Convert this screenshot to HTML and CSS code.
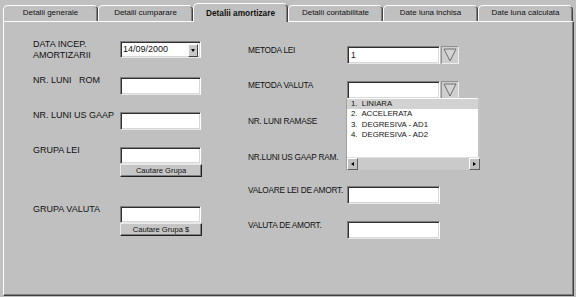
FILE: index.html
```html
<!DOCTYPE html>
<html>
<head>
    <title>Detalii amortizare</title>
    <link rel="stylesheet" href="styles.css">
</head>
<body>
    <div class="tabs">
        <div class="tab">Detalii generale</div>
        <div class="tab">Detalii cumparare</div>
        <div class="tab active">Detalii amortizare</div>
        <div class="tab">Detalii contabilitate</div>
        <div class="tab">Date luna inchisa</div>
        <div class="tab">Date luna calculata</div>
    </div>

    <div class="panel">
        <div class="col left">
            <div class="row r1">
                <span class="label">DATA INCEP.<br>AMORTIZARII</span>
                <div class="field date">
                    <span class="value">14/09/2000</span>
                    <span class="drop"><i></i></span>
                </div>
            </div>
            <div class="row r2">
                <span class="label">NR. LUNI&nbsp;&nbsp; ROM</span>
                <div class="field input"></div>
            </div>
            <div class="row r3">
                <span class="label">NR. LUNI US GAAP</span>
                <div class="field input"></div>
            </div>
            <div class="row r4">
                <span class="label">GRUPA LEI</span>
                <div class="group">
                    <div class="field input short"></div>
                    <div class="button">Cautare Grupa</div>
                </div>
            </div>
            <div class="row r5">
                <span class="label">GRUPA VALUTA</span>
                <div class="group">
                    <div class="field input short"></div>
                    <div class="button">Cautare Grupa $</div>
                </div>
            </div>
        </div>

        <div class="col right">
            <div class="row q1">
                <span class="label">METODA LEI</span>
                <div class="combo">
                    <div class="field box">1</div>
                    <div class="arrow">
                        <svg width="16" height="16" viewBox="0 0 16 16"><polygon points="2,2 14,2 8,14" fill="#d4d4d4" stroke="#6e6e6e" stroke-width="1"/></svg>
                    </div>
                </div>
            </div>
            <div class="row q2">
                <span class="label">METODA VALUTA</span>
                <div class="combo">
                    <div class="field box"></div>
                    <div class="arrow">
                        <svg width="16" height="16" viewBox="0 0 16 16"><polygon points="2,2 14,2 8,14" fill="#d4d4d4" stroke="#6e6e6e" stroke-width="1"/></svg>
                    </div>
                </div>
            </div>
            <div class="row q3">
                <span class="label">NR. LUNI RAMASE</span>
            </div>
            <div class="row q4">
                <span class="label">NR.LUNI US GAAP RAM.</span>
            </div>
            <div class="row q5">
                <span class="label">VALOARE LEI DE AMORT.</span>
                <div class="field wide"></div>
            </div>
            <div class="row q6">
                <span class="label">VALUTA DE AMORT.</span>
                <div class="field wide"></div>
            </div>
        </div>

        <div class="list">
            <div class="items">
                <div class="item selected">1.&nbsp; LINIARA</div>
                <div class="item">2.&nbsp; ACCELERATA</div>
                <div class="item">3.&nbsp; DEGRESIVA - AD1</div>
                <div class="item">4.&nbsp; DEGRESIVA - AD2</div>
            </div>
            <div class="scrollbar">
                <span class="sbtn"><i class="left-arrow"></i></span>
                <span class="track"></span>
                <span class="sbtn"><i class="right-arrow"></i></span>
            </div>
        </div>
    </div>
</body>
</html>
```

FILE: styles.css
```css
* {
    margin: 0;
    padding: 0;
    box-sizing: border-box;
}
body {
    width: 576px;
    height: 297px;
    overflow: hidden;
    background: #c0c0c0;
    color: #111;
    font-family: "Liberation Sans", Arial, sans-serif;
}

/* tab strip */
.tabs {
    display: flex;
    align-items: flex-end;
    height: 21px;
    padding-left: 3px;
}
.tab {
    width: 95px;
    height: 16px;
    background: #c0c0c0;
    border: 1px solid #fff;
    border-right-color: #404040;
    border-bottom: none;
    border-radius: 5px 5px 0 0;
    box-shadow: inset -1px 0 0 #808080;
    font-size: 8px;
    line-height: 14px;
    text-align: center;
    white-space: nowrap;
}
.tab.active {
    position: relative;
    z-index: 1;
    height: 19px;
    margin-bottom: -1px;
    font-size: 8.3px;
    font-weight: bold;
    line-height: 18px;
}

/* page body */
.panel {
    position: relative;
    display: flex;
    width: 571px;
    height: 275px;
    margin-left: 3px;
    border-top: 1px solid #fff;
    border-left: 1px solid #fff;
    border-right: 1px solid #404040;
    border-bottom: 1px solid #404040;
    box-shadow: inset -1px -1px 0 #808080;
}
.col {
    display: flex;
    flex-direction: column;
}
.row {
    display: flex;
}
.label {
    margin-top: -2px;
    line-height: 11px;
    white-space: nowrap;
}

.left {
    width: 198px;
    padding: 19px 0 0 29px;
}
.left .label {
    width: 87px;
    font-size: 9px;
}
.r2 { margin-top: 16px; }
.r3 { margin-top: 17px; }
.r4 { margin-top: 17px; }
.r5 { margin-top: 29px; }

.right {
    margin-left: 46px;
    padding-top: 24px;
}
.right .label {
    width: 99px;
    font-size: 8.3px;
    letter-spacing: -0.25px;
    margin-top: -1px;
}
.q2 { margin-top: 17px; }
.q3 { margin-top: 18px; height: 18px; }
.q4 { margin-top: 18px; height: 18px; }
.q5 { margin-top: 15px; }
.q6 { margin-top: 17px; }

/* sunken white fields */
.field {
    background: #fff;
    border-top: 1px solid #808080;
    border-left: 1px solid #808080;
    border-right: 1px solid #fff;
    border-bottom: 1px solid #e8e8e8;
    box-shadow: inset 1px 1px 0 #303030, inset -1px -1px 0 #d8d8d8;
}
.input {
    width: 81px;
    height: 18px;
}
.input.short {
    height: 17px;
}
.wide {
    width: 93px;
    height: 18px;
}

.date {
    display: flex;
    justify-content: space-between;
    width: 81px;
    height: 17px;
    padding: 2px 2px 0 2px;
}
.date .value {
    font-size: 9px;
    line-height: 11px;
}
.drop {
    display: flex;
    align-items: center;
    justify-content: center;
    width: 10px;
    height: 13px;
    background: #c8c8c8;
    border-top: 1px solid #fff;
    border-left: 1px solid #fff;
    border-right: 1px solid #404040;
    border-bottom: 1px solid #404040;
}
.drop i {
    border-left: 2.5px solid transparent;
    border-right: 2.5px solid transparent;
    border-top: 3px solid #000;
}

.group {
    display: flex;
    flex-direction: column;
}
.button {
    width: 82px;
    height: 13px;
    background: #c6c6c6;
    border-top: 1px solid #e8e8e8;
    border-left: 1px solid #e8e8e8;
    border-right: 1px solid #202020;
    border-bottom: 1px solid #202020;
    box-shadow: inset -1px -1px 0 #808080;
    font-size: 7.6px;
    line-height: 11px;
    text-align: center;
}

/* combos on the right */
.combo {
    display: flex;
}
.combo .box {
    width: 93px;
    height: 18px;
    padding-left: 3px;
    font-size: 8.5px;
    line-height: 16px;
}
.arrow {
    display: flex;
    align-items: center;
    justify-content: center;
    width: 18px;
    height: 18px;
    margin-left: 1px;
    background: #cfcfcf;
    border-top: 1px solid #909090;
    border-left: 1px solid #909090;
    border-right: 1px solid #eee;
    border-bottom: 1px solid #eee;
}

/* opened drop list */
.list {
    position: absolute;
    left: 342px;
    top: 76px;
    z-index: 2;
    display: flex;
    flex-direction: column;
    width: 134px;
    height: 72px;
    background: #fff;
    border-left: 1px solid #a0a0a0;
}
.items {
    flex: 1;
    padding-top: 1px;
    border-right: 2px solid #c4c4c4;
}
.item {
    height: 10.3px;
    padding-left: 4px;
    font-size: 7.8px;
    line-height: 10px;
    white-space: nowrap;
}
.item.selected {
    background: #d2d2d2;
}
.scrollbar {
    display: flex;
    height: 13px;
    background: #c8c8c8;
    border-top: 1px solid #e0e0e0;
}
.track {
    flex: 1;
    background: #cacaca;
}
.sbtn {
    display: flex;
    align-items: center;
    justify-content: center;
    width: 11px;
    height: 12px;
    background: #c0c0c0;
    border-top: 1px solid #fff;
    border-left: 1px solid #fff;
    border-right: 1px solid #606060;
    border-bottom: 1px solid #606060;
}
.left-arrow {
    border-top: 2.5px solid transparent;
    border-bottom: 2.5px solid transparent;
    border-right: 3px solid #000;
}
.right-arrow {
    border-top: 2.5px solid transparent;
    border-bottom: 2.5px solid transparent;
    border-left: 3px solid #000;
}
```
